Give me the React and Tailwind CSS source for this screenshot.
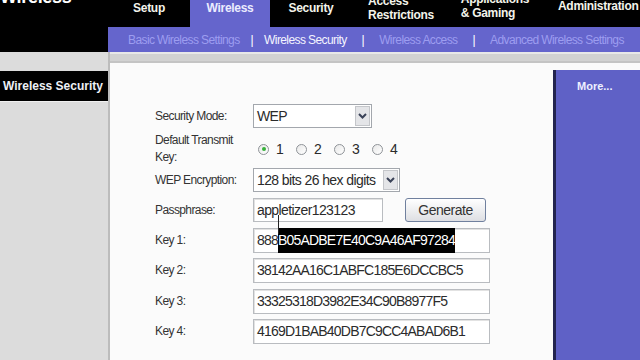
import React from "react";

const tabs = [
  { w: "w-[82px]", lines: ["Setup"], pt: "pt-[1px]" },
  { w: "w-[80px]", lines: ["Wireless"], pt: "pt-[1px]", active: true },
  { w: "w-[82px]", lines: ["Security"], pt: "pt-[1px]" },
  { w: "w-[98px]", lines: ["Access", "Restrictions"], pt: "-mt-[6px]" },
  { w: "w-[90px]", lines: ["Applications", "& Gaming"], pt: "-mt-[8px]" },
];

function Chevron() {
  return (
    <svg width="9" height="6" viewBox="0 0 9 6">
      <path d="M1 1 L4.5 4.5 L8 1" fill="none" stroke="#3a4258" strokeWidth="2" />
    </svg>
  );
}

function Select({ value, w }) {
  return (
    <div className={`${w} flex h-[24px] items-stretch border border-[#a3a7ad] bg-white`}>
      <div className="flex flex-1 items-center pl-[3px] text-[14px] tracking-[-0.6px] text-[#2b2b2b]">{value}</div>
      <div className="m-[1px] flex w-[15px] items-center justify-center border border-[#c4c6ca] bg-[#e4e5e8]">
        <Chevron />
      </div>
    </div>
  );
}

function Radio({ n, on }) {
  return (
    <div className="flex w-[38px] items-center gap-[7px]">
      <div className="flex h-[11px] w-[11px] items-center justify-center rounded-full border border-[#8f9398] bg-gradient-to-br from-[#e8e8e8] to-white">
        {on && <div className="h-[4px] w-[4px] rounded-full bg-[#36b03a]" />}
      </div>
      <span className="text-[14px] text-[#2b2b2b]">{n}</span>
    </div>
  );
}

function Field({ w, children }) {
  return (
    <div className={`${w} flex h-full items-center border border-[#b9bcc0] bg-white pl-[3px] text-[14px] tracking-[-0.8px] text-[#2b2b2b] shadow-[inset_1px_1px_0_#e2e2e2]`}>
      {children}
    </div>
  );
}

function Row({ label, h, mt, children }) {
  return (
    <div className={`flex ${h} ${mt} items-center`}>
      <div className="w-[98px] text-[12px] leading-[17px] tracking-[-0.6px] text-[#333]">{label}</div>
      {children}
    </div>
  );
}

export default function App() {
  return (
    <div className="h-[360px] w-[640px] overflow-hidden bg-[#dadada] font-['Liberation_Sans',Arial,sans-serif]">
      {/* tab bar */}
      <div className="flex h-[27px] bg-black text-[12px] font-bold leading-[14px] tracking-[-0.3px] text-[#f3f3ea]">
        <div className="w-[108px] overflow-hidden">
          <div className="-mt-[13px] text-[18px] leading-[20px] text-white">Wireless</div>
        </div>
        {tabs.map((t, i) => (
          <div
            key={i}
            className={`${t.w} flex justify-center ${t.active ? "bg-[#6565cc] text-[#ececff]" : ""}`}
          >
            <div className={`${t.pt} ${t.lines.length > 1 ? "text-left" : ""}`}>
              {t.lines.map((l) => (
                <div key={l}>{l}</div>
              ))}
            </div>
          </div>
        ))}
        <div className="flex-1 pl-[18px] -mt-[1px]">Administration</div>
      </div>

      {/* sub nav */}
      <div className="flex h-[25px]">
        <div className="w-[108px] bg-black" />
        <div className="flex flex-1 items-center bg-[#6565cc] pl-[20px] text-[12px] tracking-[-0.6px] text-[#9d9df0]">
          <span>Basic Wireless Settings</span>
          <span className="mx-[11px] text-white">|</span>
          <span className="text-[#f4f4ff]">Wireless Security</span>
          <span className="mx-[15px] text-white">|</span>
          <span>Wireless Access</span>
          <span className="mx-[15px] text-white">|</span>
          <span>Advanced Wireless Settings</span>
        </div>
      </div>

      {/* body */}
      <div className="flex h-[308px]">
        <div className="w-[110px] border-r-2 border-[#bcbcbc] bg-[#dcdcdc] pt-[19px]">
          <div className="flex h-[31px] items-center border-b border-[#f0f0f0] bg-black pl-[3px] text-[12px] font-bold text-[#eef0f6]">
            Wireless Security
          </div>
        </div>

        <div className="flex flex-1 flex-col">
          <div className="h-[11px] border-t-2 border-b-2 border-[#e8e8e8] border-b-[#c4c4c4] bg-[#d2d2d2]" />
          <div className="flex flex-1 bg-[#fbfbfb]">
            <div className="flex flex-1 flex-col pl-[45px] pt-[41px]">
              <Row label="Security Mode:" h="h-[24px]" mt="">
                <Select value="WEP" w="w-[119px]" />
              </Row>
              <Row label={<>Default Transmit<br />Key:</>} h="h-[34px]" mt="mt-[4px]">
                <div className="flex pl-[5px]">
                  <Radio n="1" on />
                  <Radio n="2" />
                  <Radio n="3" />
                  <Radio n="4" />
                </div>
              </Row>
              <Row label="WEP Encryption:" h="h-[24px]" mt="mt-[2px]">
                <Select value="128 bits 26 hex digits" w="w-[147px]" />
              </Row>
              <Row label="Passphrase:" h="h-[24px]" mt="mt-[6px]">
                <div className="relative h-full">
                  <Field w="w-[130px]">
                    <span className="tracking-[-0.6px]">appletizer123123</span>
                  </Field>
                  <div className="absolute left-[25px] top-[17px] h-[19px] w-[1px] bg-[#222]" />
                </div>
                <button className="ml-[22px] h-[24px] w-[81px] rounded-[3px] border border-[#70809e] bg-gradient-to-b from-white to-[#dedfe3] text-[14px] tracking-[-0.5px] text-[#333]">
                  Generate
                </button>
              </Row>
              <Row label="Key 1:" h="h-[25px]" mt="mt-[6px]">
                <Field w="w-[237px]">
                  <span>888</span>
                  <span className="bg-black py-[2px] text-white">B05ADBE7E40C9A46AF97284</span>
                </Field>
              </Row>
              <Row label="Key 2:" h="h-[25px]" mt="mt-[5px]">
                <Field w="w-[237px]">38142AA16C1ABFC185E6DCCBC5</Field>
              </Row>
              <Row label="Key 3:" h="h-[25px]" mt="mt-[6px]">
                <Field w="w-[237px]">33325318D3982E34C90B8977F5</Field>
              </Row>
              <Row label="Key 4:" h="h-[25px]" mt="mt-[5px]">
                <Field w="w-[237px]">4169D1BAB40DB7C9CC4ABAD6B1</Field>
              </Row>
            </div>
            <div className="mt-[7px] w-[87px] border-l-[3px] border-[#23244f] bg-[#5f61c6] pl-[21px] pt-[8px] text-[11px] font-bold text-[#eef0ff]">
              More...
            </div>
          </div>
        </div>
      </div>
    </div>
  );
}
